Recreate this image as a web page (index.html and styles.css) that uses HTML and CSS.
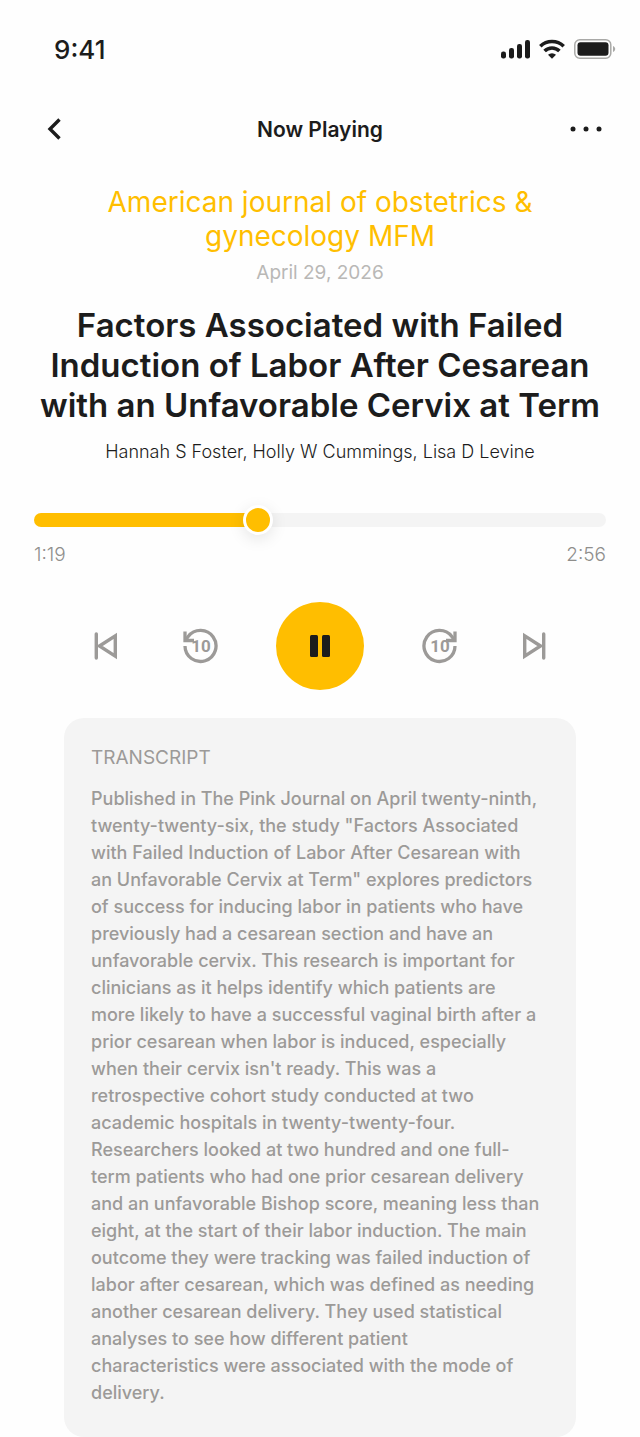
FILE: index.html
```html
<!DOCTYPE html>
<html lang="en">
<head>
    <meta charset="UTF-8">
    <meta name="viewport" content="width=device-width, initial-scale=1.0">
    <title>Now Playing</title>
    <link rel="stylesheet" href="styles.css">
</head>
<body>
    <!-- Status bar -->
    <div class="status-bar">
        <span class="clock">9:41</span>
        <div class="status-icons">
            <svg width="30" height="20" viewBox="0 0 30 20" fill="#1c1c1c">
                <rect x="1" y="12.5" width="5" height="7" rx="2.2"/>
                <rect x="9" y="9" width="5" height="10.5" rx="2.2"/>
                <rect x="17" y="5" width="5" height="14.5" rx="2.2"/>
                <rect x="25" y="1" width="5" height="18.5" rx="2.2"/>
            </svg>
            <svg width="26" height="20" viewBox="0 0 26 20" fill="none" stroke="#1c1c1c" stroke-width="3.6">
                <path d="M1.3 7.2a17 17 0 0 1 23.4 0"/>
                <path d="M5.6 12a10.5 10.5 0 0 1 14.800 0"/>
                <path d="M9 15.800a6 6 0 0 1 8 0L13 19.800z" fill="#1c1c1c" stroke="none"/>
            </svg>
            <svg width="42" height="20" viewBox="0 0 42 20">
                <rect x="0.8" y="0.8" width="36" height="18.4" rx="5" fill="none" stroke="#a9a9a7" stroke-width="1.5"/>
                <rect x="3.5" y="3.3" width="31" height="13.400" rx="3" fill="#1c1c1c"/>
                <path d="M39 7v6c1.300-.5 2.200-1.700 2.200-3S40.300 7.500 39 7z" fill="#a9a9a7"/>
            </svg>
        </div>
    </div>

    <!-- Top navigation -->
    <header class="nav">
        <button type="button" class="nav-button" aria-label="Back">
            <svg width="34" height="24" viewBox="0 0 34 24" fill="none" stroke="#1c1c1c" stroke-width="3.4">
                <path d="M22.5 2.5L13 12l9.5 9.5"/>
            </svg>
        </button>
        <h1>Now Playing</h1>
        <button type="button" class="nav-button" aria-label="More">
            <svg width="34" height="24" viewBox="0 0 34 24" fill="#1c1c1c">
                <circle cx="4" cy="12" r="2.5"/>
                <circle cx="17" cy="12" r="2.5"/>
                <circle cx="30" cy="12" r="2.5"/>
            </svg>
        </button>
    </header>

    <main>
        <div class="article">
            <p class="journal">American journal of obstetrics &amp;<br>gynecology MFM</p>
            <p class="date">April 29, 2026</p>
            <h2>Factors Associated with Failed<br>Induction of Labor After Cesarean<br>with an Unfavorable Cervix at Term</h2>
            <p class="authors">Hannah S Foster, Holly W Cummings, Lisa D Levine</p>
        </div>

        <!-- Playback position -->
        <div class="progress">
            <input type="range" class="seek" min="0" max="176" value="68" aria-label="Playback position">
            <div class="times">
                <span>1:19</span>
                <span>2:56</span>
            </div>
        </div>

        <div class="controls">
            <button type="button" aria-label="Previous">
                <svg width="36" height="36" viewBox="0 0 36 36" fill="none" stroke="#9c9a98" stroke-width="3.4">
                    <path d="M8.3 6v24" stroke-linecap="round"/>
                    <path d="M11.500 18L27.300 7.800v20.400z"/>
                </svg>
            </button>
            <button type="button" aria-label="Back 10 seconds">
                <svg width="36" height="36" viewBox="0 0 36 36" fill="none" stroke="#9c9a98" stroke-width="3.3">
                    <path d="M3 18A15.500 15.500 0 1 0 6.200 8.500L3.500 12"/>
                    <path d="M3 3.500V12.500H12"/>
                    <text class="seconds" x="19" y="24">10</text>
                </svg>
            </button>
            <button type="button" class="play" aria-label="Pause">
                <svg width="24" height="24" viewBox="0 0 24 24" fill="#1c1c1c">
                    <rect x="2" y="1" width="8" height="22" rx="1.500"/>
                    <rect x="14" y="1" width="8" height="22" rx="1.500"/>
                </svg>
            </button>
            <button type="button" aria-label="Forward 10 seconds">
                <svg width="36" height="36" viewBox="0 0 36 36" fill="none" stroke="#9c9a98" stroke-width="3.3">
                    <path d="M33 18A15.500 15.500 0 1 1 29.800 8.500L32.500 12"/>
                    <path d="M33 3.500V12.500H24"/>
                    <text class="seconds" x="18" y="24">10</text>
                </svg>
            </button>
            <button type="button" aria-label="Next">
                <svg width="36" height="36" viewBox="0 0 36 36" fill="none" stroke="#9c9a98" stroke-width="3.4">
                    <path d="M27.700 6v24" stroke-linecap="round"/>
                    <path d="M24.500 18L8.700 7.800v20.400z"/>
                </svg>
            </button>
        </div>

        <section class="transcript">
            <h3>TRANSCRIPT</h3>
            <p>
                Published in The Pink Journal on April twenty-ninth,<br>
                twenty-twenty-six, the study "Factors Associated<br>
                with Failed Induction of Labor After Cesarean with<br>
                an Unfavorable Cervix at Term" explores predictors<br>
                of success for inducing labor in patients who have<br>
                previously had a cesarean section and have an<br>
                unfavorable cervix. This research is important for<br>
                clinicians as it helps identify which patients are<br>
                more likely to have a successful vaginal birth after a<br>
                prior cesarean when labor is induced, especially<br>
                when their cervix isn't ready. This was a<br>
                retrospective cohort study conducted at two<br>
                academic hospitals in twenty-twenty-four.<br>
                Researchers looked at two hundred and one full-<br>
                term patients who had one prior cesarean delivery<br>
                and an unfavorable Bishop score, meaning less than<br>
                eight, at the start of their labor induction. The main<br>
                outcome they were tracking was failed induction of<br>
                labor after cesarean, which was defined as needing<br>
                another cesarean delivery. They used statistical<br>
                analyses to see how different patient<br>
                characteristics were associated with the mode of<br>
                delivery.
            </p>
        </section>
    </main>
</body>
</html>
```
FILE: styles.css
```css
/* Global Styles */
body {
    font-family: Inter, 'Liberation Sans', sans-serif;
    background-color: #fefefe;
    color: #1c1c1c;
    margin: 0;
}

h1, h2, h3, p {
    margin: 0;
    font-weight: 400;
}

button {
    display: flex;
    align-items: center;
    justify-content: center;
    padding: 0;
    border: none;
    background: none;
    cursor: pointer;
}

svg {
    display: block;
}

/* Status bar */
.status-bar {
    display: flex;
    justify-content: space-between;
    align-items: center;
    height: 98px;
    padding: 0 24px 0 54px;
}

.clock {
    font-size: 26px;
    font-weight: 500;
}

.status-icons {
    display: flex;
    gap: 9px;
}

/* Navigation */
.nav {
    display: flex;
    justify-content: space-between;
    align-items: center;
    height: 62px;
    padding: 0 37px;
}

.nav h1 {
    font-size: 21px;
    font-weight: 600;
}

/* Article details */
.article {
    text-align: center;
    margin-top: 25px;
}

.journal {
    font-size: 28px;
    line-height: 34px;
    color: #ffbe00;
}

.date {
    margin-top: 8px;
    font-size: 19px;
    line-height: 24px;
    color: #b9b8b6;
}

.article h2 {
    margin-top: 20px;
    font-size: 33px;
    line-height: 40px;
    font-weight: 600;
}

.authors {
    margin-top: 15px;
    font-size: 18px;
    line-height: 24px;
    font-weight: 300;
}

/* Seek slider */
.progress {
    margin: 41px 34px 0;
}

.seek {
    -webkit-appearance: none;
    appearance: none;
    display: block;
    width: 100%;
    height: 30px;
    margin: 0;
    background: none;
}

.seek::-webkit-slider-runnable-track {
    height: 14px;
    border-radius: 7px;
    background: linear-gradient(to right, #ffbe00 39%, #f4f4f4 39%);
}

.seek::-webkit-slider-thumb {
    -webkit-appearance: none;
    width: 30px;
    height: 30px;
    margin-top: -8px;
    border: 3px solid #fff;
    border-radius: 50%;
    background-color: #ffbe00;
    box-shadow: 0 4px 16px rgba(0, 0, 0, 0.1);
}

.times {
    display: flex;
    justify-content: space-between;
    margin-top: 8px;
    font-size: 19px;
    line-height: 24px;
    font-weight: 300;
    color: #8f8e8c;
}

/* Playback buttons */
.controls {
    display: flex;
    justify-content: center;
    align-items: center;
    gap: 58px;
    height: 90px;
    margin-top: 34px;
}

.play {
    width: 88px;
    height: 88px;
    border-radius: 50%;
    background-color: #ffbe00;
}

.seconds {
    font-family: Roboto, sans-serif;
    font-size: 17px;
    font-weight: 700;
    text-anchor: middle;
    fill: #9c9a98;
    stroke: none;
}

/* Transcript card */
.transcript {
    margin: 27px 64px 0;
    padding: 26px 27px 31px;
    border-radius: 20px;
    background-color: #f4f4f4;
    color: #9c9a98;
}

.transcript h3 {
    font-size: 19px;
    line-height: 27px;
}

.transcript p {
    margin-top: 14px;
    font-size: 18px;
    line-height: 27px;
    font-weight: 500;
    white-space: nowrap;
}
```
